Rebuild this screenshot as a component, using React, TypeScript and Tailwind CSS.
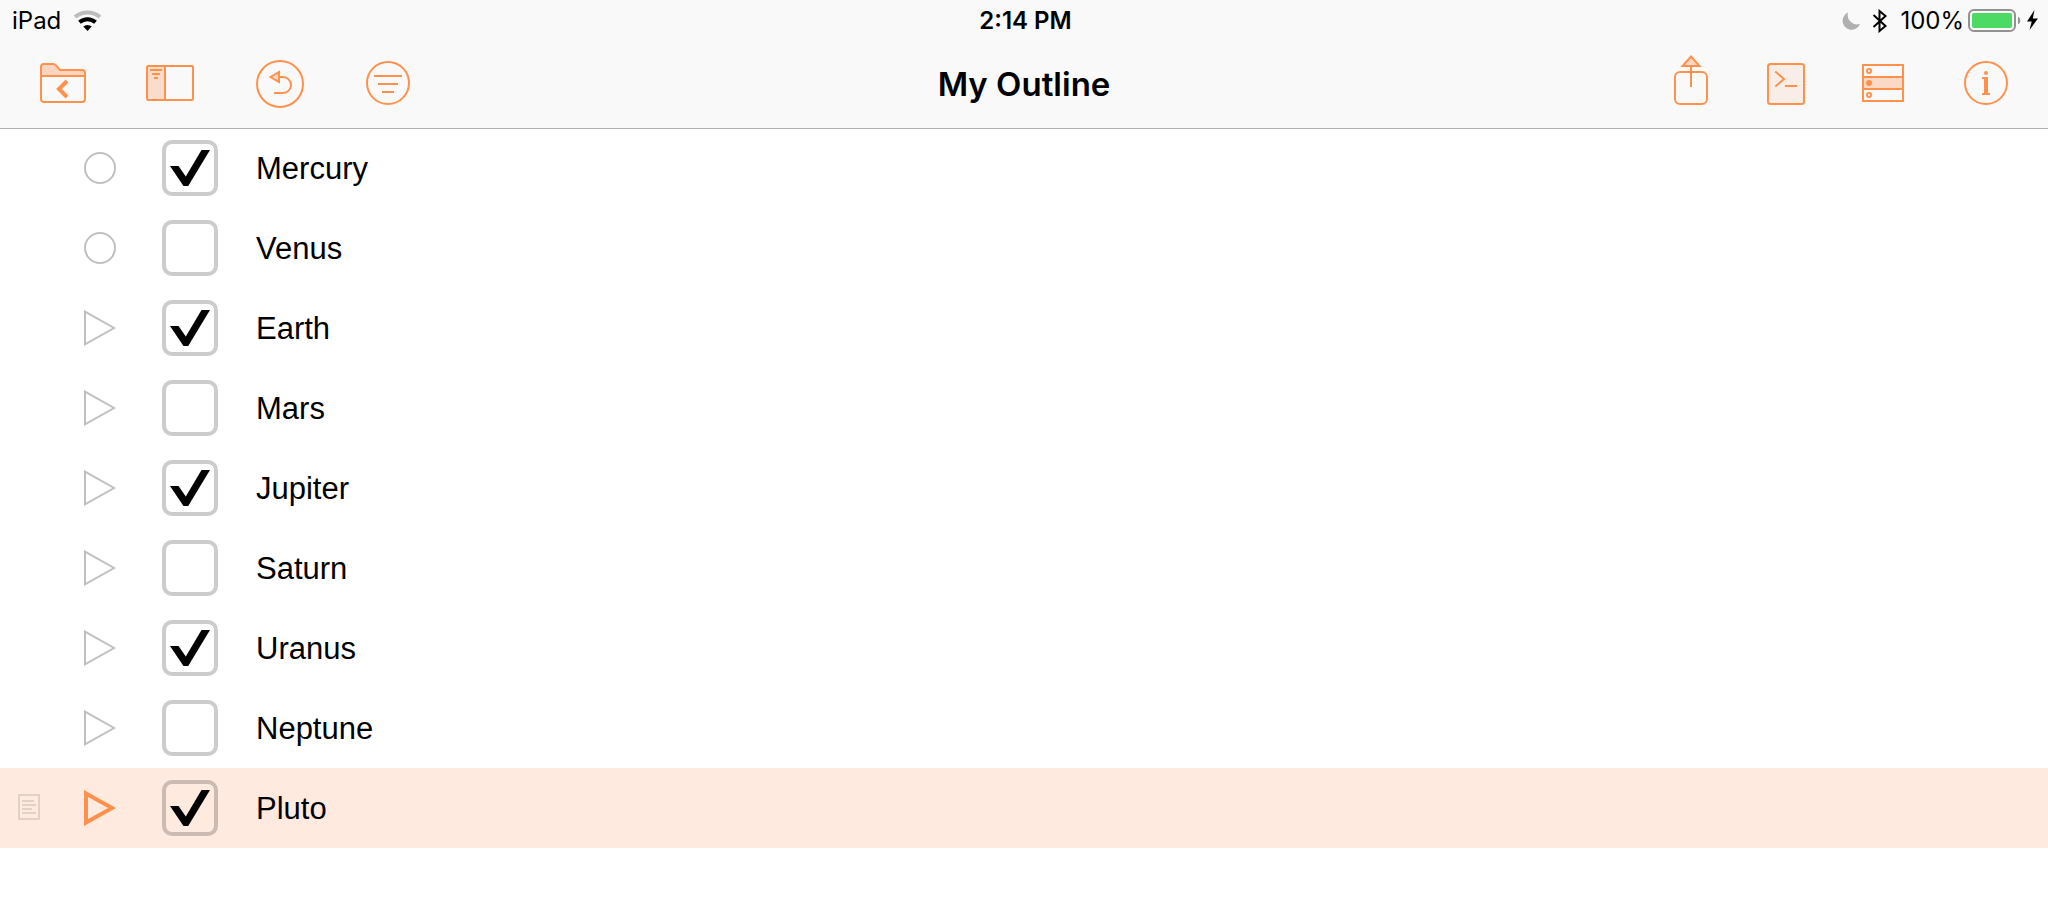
import { useState } from "react";
import type { ReactNode } from "react";

type Planet = { name: string; done: boolean; expandable: boolean; selected?: boolean };

const PLANETS: Planet[] = [
  { name: "Mercury", done: true, expandable: false },
  { name: "Venus", done: false, expandable: false },
  { name: "Earth", done: true, expandable: true },
  { name: "Mars", done: false, expandable: true },
  { name: "Jupiter", done: true, expandable: true },
  { name: "Saturn", done: false, expandable: true },
  { name: "Uranus", done: true, expandable: true },
  { name: "Neptune", done: false, expandable: true },
  { name: "Pluto", done: true, expandable: true, selected: true },
];

const TINT = "#fbd5c0";

function ToolButton({ label, children }: { label: string; children: ReactNode }) {
  return (
    <button type="button" aria-label={label} className="block shrink-0 text-[#ff914d]">
      <svg width="52" height="64" viewBox="0 0 52 64" fill="none" stroke="currentColor" strokeWidth="2">
        {children}
      </svg>
    </button>
  );
}

function StatusBar() {
  return (
    <div className="grid h-10 grid-cols-[1fr_auto_1fr] items-center pt-0.5 pr-[9px] pl-3 text-2xl leading-9">
      <div className="flex items-center gap-3">
        <span>iPad</span>
        <svg width="30" height="22" viewBox="0 0 30 22" fill="none" aria-label="Wi-Fi">
          <path d="M2 7a19.500 19.500 0 0 1 25 0" stroke="#bdbdbd" strokeWidth="4" />
          <path d="M6.500 12.200a12 12 0 0 1 16 0" stroke="#000" strokeWidth="4" />
          <path d="M10.300 16.500a6.400 6.400 0 0 1 8.400 0L14.500 21z" fill="#000" />
        </svg>
      </div>
      <span className="font-semibold">2:14 PM</span>
      <div className="flex items-center justify-end gap-3">
        <svg width="18" height="20" viewBox="0 0 18 20" aria-label="Do not disturb">
          <path d="M6 1.500A9 9 0 1 0 18 13 9.500 9.500 0 0 1 6 1.500z" fill="#b0b0b0" />
        </svg>
        <svg width="16" height="24" viewBox="0 0 16 24" fill="none" stroke="#000" strokeWidth="2" aria-label="Bluetooth">
          <path d="M1.500 6L13.500 17l-6 5V2l6 5-12 11" />
        </svg>
        <span>100%</span>
        <svg width="71" height="24" viewBox="0 0 71 24" className="-ml-2" aria-label="Battery charging">
          <rect x="1" y="1" width="46" height="21" rx="5" fill="none" stroke="#929292" strokeWidth="2" />
          <rect x="4" y="4" width="40" height="15" rx="2" fill="#4cd964" />
          <path d="M50 7.500a4.600 4.600 0 0 1 0 8z" fill="#929292" />
          <path d="M66.500 1L59 12.500h4.700L61.500 21 70 9.500h-5.200z" fill="#000" />
        </svg>
      </div>
    </div>
  );
}

function Toolbar() {
  return (
    <nav className="grid h-22 grid-cols-[1fr_auto_1fr] items-center px-[38px]">
      <div className="flex gap-14">
        <ToolButton label="Documents">
          <path d="M3 24V15a3 3 0 0 1 3-3h9c1.600 0 2.400.6 3.200 1.600L22 18h22a3 3 0 0 1 3 3v3z" fill={TINT} stroke="none" />
          <path d="M3 15a3 3 0 0 1 3-3h9c1.600 0 2.400.6 3.200 1.600L22 18h22a3 3 0 0 1 3 3v26a3 3 0 0 1-3 3H6a3 3 0 0 1-3-3zM3 24h44" />
          <path d="M29 29l-8 8 8 8" strokeWidth="4" />
        </ToolButton>
        <ToolButton label="Sidebar">
          <path d="M1 14h18v34H1z" fill="#fbdccb" stroke="none" />
          <rect x="1" y="14" width="46" height="34" rx="1" />
          <path d="M19 14v34M4 18h12M6 22h8M8 26h4" />
        </ToolButton>
        <ToolButton label="Undo">
          <circle cx="26" cy="32" r="23" />
          <path d="M16.500 25L25 20v10z" fill={TINT} />
          <path d="M25 25h4a8 8 0 0 1 0 16h-9" />
        </ToolButton>
        <ToolButton label="Filter">
          <circle cx="26" cy="31" r="21" />
          <path d="M12 24h28M16 32h20M20 40h12" />
        </ToolButton>
      </div>
      <h1 className="text-[33px] leading-10 font-semibold">My Outline</h1>
      <div className="flex justify-end gap-12">
        <ToolButton label="Share">
          <rect x="17" y="20" width="32" height="32" rx="5" />
          <path d="M33 4.500L41.500 14h-17z" fill={TINT} />
          <path d="M33 14v21" />
        </ToolButton>
        <ToolButton label="Console">
          <rect x="10" y="12" width="36" height="40" rx="2.500" fill="#f9ede8" />
          <path d="M17.300 19.500l8.700 7.500-8.700 7.500M27 34h12" />
        </ToolButton>
        <ToolButton label="View options">
          <path d="M5 25h40v12H5z" fill="#fbd9c6" />
          <path d="M5 13h40v36H5z" />
          <circle cx="11" cy="19" r="2" />
          <circle cx="11" cy="31" r="2" fill="currentColor" />
          <circle cx="11" cy="43" r="2" />
        </ToolButton>
        <ToolButton label="Inspector">
          <circle cx="28" cy="31" r="21" />
          <circle cx="28" cy="21" r="2" fill="currentColor" stroke="none" />
          <path d="M24 26h5M24 42h8" />
          <path d="M28 25v17" strokeWidth="4" />
        </ToolButton>
      </div>
    </nav>
  );
}

function Handle({ planet }: { planet: Planet }) {
  const selected = planet.selected;
  return (
    <button
      type="button"
      aria-label={planet.expandable ? `Expand ${planet.name}` : `${planet.name} handle`}
      className={selected ? "block text-[#ff914d]" : "block text-[#c0c0c0]"}
    >
      <svg width="32" height="40" viewBox="0 0 32 40" fill="none" stroke="currentColor">
        {!planet.expandable && <circle cx="16" cy="20" r="15" strokeWidth="2" />}
        {planet.expandable && !selected && <path d="M1 3.700L30 20 1 36.300z" strokeWidth="2" />}
        {selected && <path d="M2 5.400L28 20 2 34.600z" strokeWidth="4" />}
      </svg>
    </button>
  );
}

function Row({ planet }: { planet: Planet }) {
  const [done, setDone] = useState(planet.done);
  const id = `row-${planet.name.toLowerCase()}`;
  return (
    <li className={planet.selected ? "flex h-20 items-center bg-[#ffeadf]" : "flex h-20 items-center"}>
      <div className="w-[84px] shrink-0 pl-[18px]">
        {planet.selected && (
          <button type="button" aria-label="Note" className="block text-[#e2d1c7]">
            <svg width="22" height="28" viewBox="0 0 22 28" fill="none" stroke="currentColor" strokeWidth="2">
              <path d="M1 1h20v24H1zM4 7h12M4 11h14M4 15h10M4 19h14" />
            </svg>
          </button>
        )}
      </div>
      <Handle planet={planet} />
      <div className="ml-[46px] grid shrink-0">
        <input
          id={id}
          type="checkbox"
          checked={done}
          onChange={(e) => setDone(e.target.checked)}
          className="col-start-1 row-start-1 size-14 appearance-none rounded-[10px] border-4 border-black/20"
        />
        {done && (
          <svg width="56" height="56" viewBox="0 0 56 56" className="pointer-events-none col-start-1 row-start-1">
            <path d="M8 26h8.500l7.300 10.500L39.500 10H48L26.200 46h-4.700z" fill="#000" />
          </svg>
        )}
      </div>
      <label htmlFor={id} className="ml-[38px] pt-0.5 font-['Liberation_Sans',sans-serif] text-[31px] leading-10">
        {planet.name}
      </label>
    </li>
  );
}

export default function App() {
  return (
    <div className="min-h-screen bg-white font-['Inter',sans-serif] text-black">
      <header className="relative bg-[#f9f9f9] shadow-[0_1px_0_#b2b2b2]">
        <StatusBar />
        <Toolbar />
      </header>
      <main>
        <ul>
          {PLANETS.map((planet) => (
            <Row key={planet.name} planet={planet} />
          ))}
        </ul>
      </main>
    </div>
  );
}
